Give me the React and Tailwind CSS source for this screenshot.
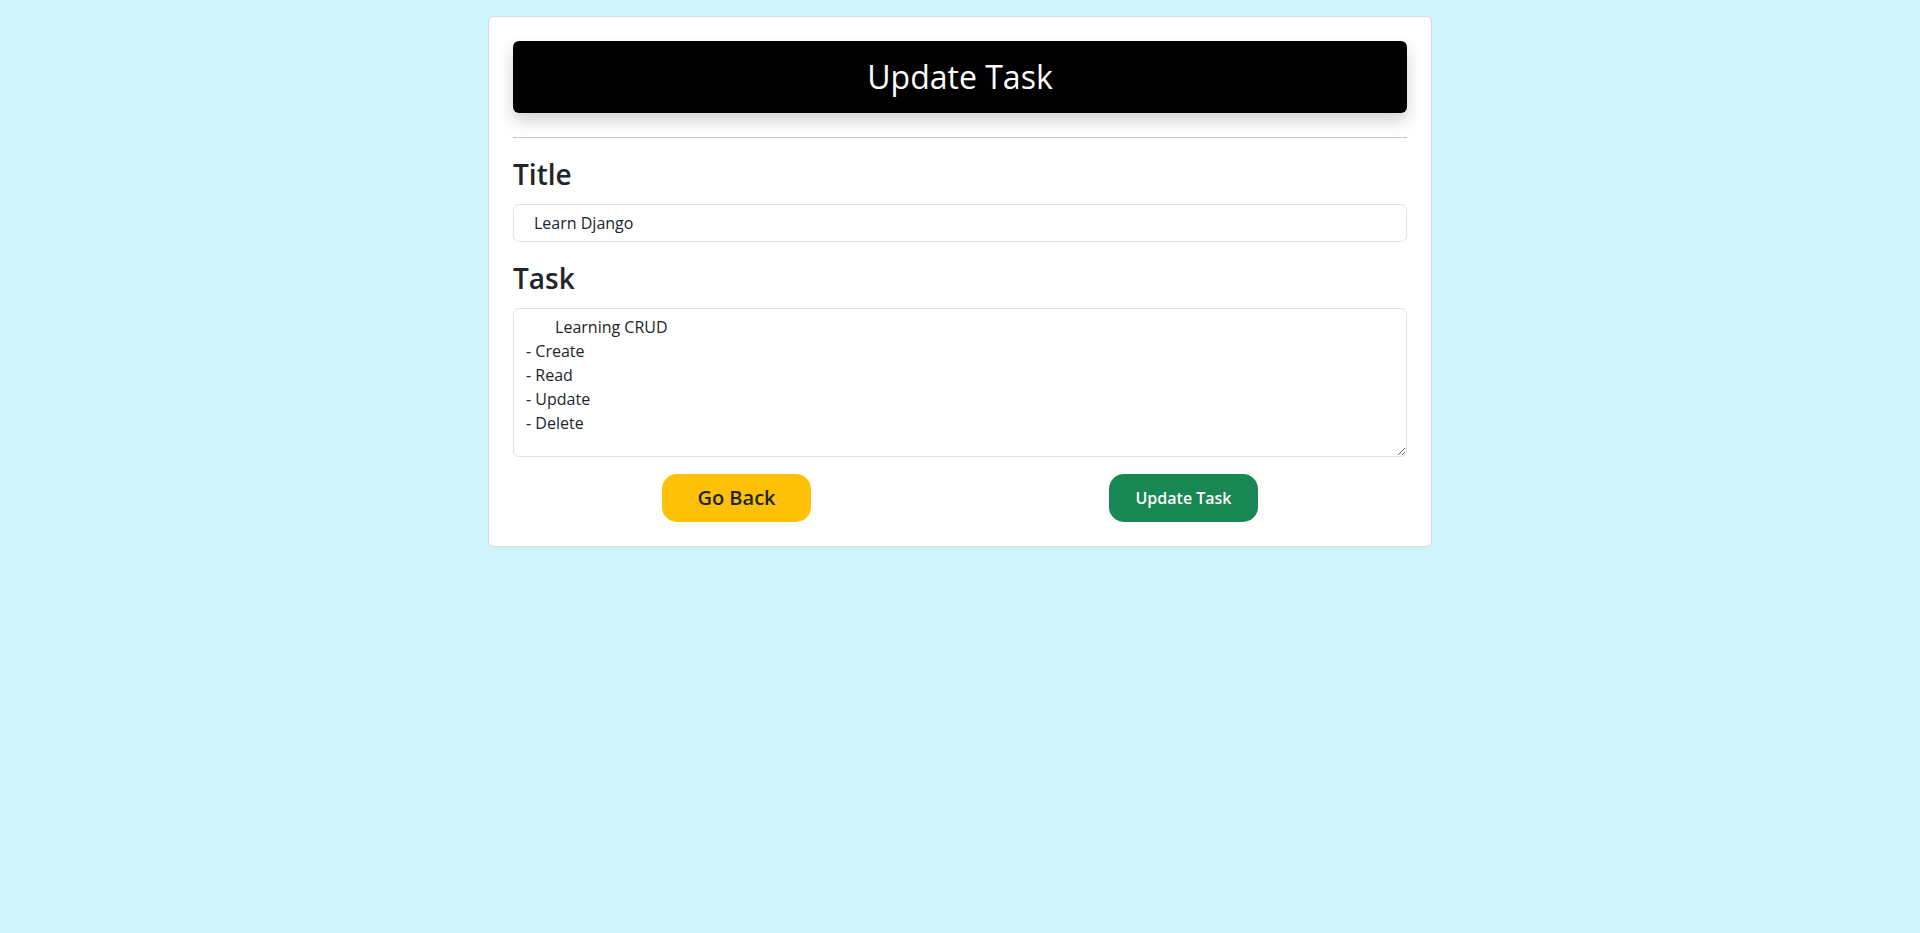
import React from 'react';

const taskText = `       Learning CRUD
- Create
- Read
- Update
- Delete`;

function App() {
  return (
    <div className="min-h-screen bg-[#cff4fc] pt-4 font-['Open_Sans',sans-serif] text-[#212529]">
      <div className="mx-auto w-[944px] rounded-md border border-[#d6dadd] bg-white p-6">
        {/* header banner */}
        <div className="flex h-[72px] items-center justify-center rounded-md bg-black text-[32px] font-normal text-white shadow-[0_8px_16px_rgba(0,0,0,0.18)]">
          Update Task
        </div>

        <hr className="mt-6 mb-5 border-[#c8c8c8]" />

        <form onSubmit={(e) => e.preventDefault()}>
          <h3 className="mb-3 text-[28px] leading-[1.2] font-semibold">Title</h3>
          <input
            type="text"
            defaultValue="Learn Django"
            className="block h-[38px] w-full rounded-md border border-[#dee2e6] pr-3 pl-[20px] text-base text-[#212529] outline-none"
          />

          <h3 className="mt-5 mb-[13px] text-[28px] leading-[1.2] font-semibold">Task</h3>
          <textarea
            defaultValue={taskText}
            className="block h-[149px] w-full rounded-md border border-[#dee2e6] px-3 py-[6px] text-base leading-6 text-[#212529] outline-none"
          />

          <div className="mt-[17px] grid grid-cols-2">
            <div className="flex justify-center">
              <button
                type="button"
                className="h-12 w-[149px] rounded-[15px] bg-[#ffc107] text-xl font-semibold text-[#212529]"
              >
                Go Back
              </button>
            </div>
            <div className="flex justify-center">
              <button
                type="submit"
                className="h-12 w-[149px] rounded-[15px] bg-[#198754] text-base font-semibold text-white"
              >
                Update Task
              </button>
            </div>
          </div>
        </form>
      </div>
    </div>
  );
}

export default App;
